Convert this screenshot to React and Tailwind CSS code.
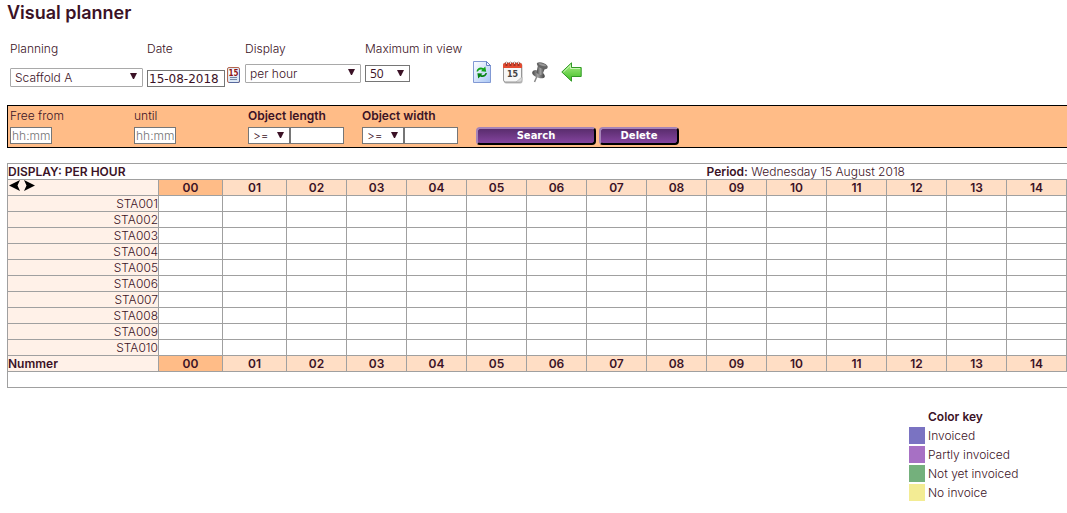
import clsx from 'clsx';

const HOURS = ['00', '01', '02', '03', '04', '05', '06', '07', '08', '09', '10', '11', '12', '13', '14'];

const OBJECTS = [
  'STA001', 'STA002', 'STA003', 'STA004', 'STA005',
  'STA006', 'STA007', 'STA008', 'STA009', 'STA010',
];

const COLOR_KEY = [
  { label: 'Invoiced', color: 'bg-[#7a73c2]' },
  { label: 'Partly invoiced', color: 'bg-[#a770c4]' },
  { label: 'Not yet invoiced', color: 'bg-[#74b07c]' },
  { label: 'No invoice', color: 'bg-[#f3ec94]' },
];

const Select = ({ id, label, options, className }) => (
  <span className={clsx('relative block', className)}>
    <select
      id={id}
      aria-label={label}
      className="block h-full w-full appearance-none rounded-[inherit] border border-[inherit] bg-white pl-1 outline-none"
    >
      {options.map((option) => (
        <option key={option}>{option}</option>
      ))}
    </select>
    <svg viewBox="0 0 7 6" className="pointer-events-none absolute top-[5px] right-[6px] h-[6px] w-[7px]">
      <path d="M0 0h7L4 6H3z" fill="#3b1226" />
    </svg>
  </span>
);

const SmallCalendarIcon = () => (
  <svg viewBox="0 0 13 16" className="h-4 w-[13px]">
    <rect x=".5" y=".5" width="12" height="15" rx="1.5" fill="#dce8f6" stroke="#b4674f" />
    <path d="M12.500 3v11.500q0 1-1 1H2" fill="none" stroke="#56689c" />
    <rect x="2" y="2" width="9" height="7" fill="#fff" />
    <text x="6.500" y="8.500" textAnchor="middle" fontFamily="DejaVu Sans Condensed, DejaVu Sans, sans-serif" fontSize="8" fontWeight="bold" fill="#8c1414">15</text>
    <path d="M3 10.500h7M3 12.500h7" stroke="#7487a4" />
  </svg>
);

const RefreshIcon = () => (
  <svg viewBox="0 0 18 22" className="h-[22px] w-[18px]">
    <defs>
      <linearGradient id="sheet" x1="0" y1="0" x2="1" y2="1">
        <stop offset="0" stopColor="#fff" />
        <stop offset="1" stopColor="#a9c6f5" />
      </linearGradient>
    </defs>
    <path d="M.5.5h13l4 4v17H.5z" fill="url(#sheet)" stroke="#8199d4" />
    <path d="M13.5.5v4h4z" fill="#f4f8ff" stroke="#6581c4" />
    <path d="M3.500 10.500C4 7 7.500 5.500 10.500 7.200L12.300 5.500 13.200 10.700 8 10.300 9.400 8.800C7.300 7.900 5.700 8.500 5 10.500z" fill="#12a51c" />
    <path d="M14 12c-.6 3.500-4 5-6.800 3.500L5.200 17.400 4.400 12.200l5.100.3-1.300 1.400c1.800.8 3.500.1 4.300-1.900z" fill="#078312" />
  </svg>
);

const CalendarIcon = () => (
  <svg viewBox="0 0 20 23" className="h-[23px] w-5">
    <rect x="1" y="2.500" width="18.500" height="20" rx="2" fill="#b9b9b9" />
    <rect x=".5" y="2" width="18" height="19" rx="2" fill="#f7f7f7" stroke="#969696" />
    <path d="M0 7V3.500Q0 2 2 2h15q2 0 2 1.500V7z" fill="#e34a30" />
    <path d="M3.500 1v4M7.500 1v4M11.500 1v4M15.500 1v4" stroke="#9c3324" strokeWidth="2" />
    <path d="M3.500 0v3M7.500 0v3M11.500 0v3M15.500 0v3" stroke="#e8d5d0" />
    <text x="9.500" y="15.500" textAnchor="middle" fontFamily="DejaVu Sans, sans-serif" fontSize="8" fontWeight="bold" fill="#444">15</text>
    <path d="M13 21l6-5v3q0 2-2 2z" fill="#d8d8d8" stroke="#aaa" strokeWidth=".6" />
  </svg>
);

const PinIcon = () => (
  <svg viewBox="0 0 16 21" className="h-[21px] w-4">
    <defs>
      <linearGradient id="pin" x1="0" y1="0" x2="1" y2="0">
        <stop offset="0" stopColor="#444" />
        <stop offset=".45" stopColor="#a0a0a0" />
        <stop offset="1" stopColor="#404040" />
      </linearGradient>
    </defs>
    <path d="M5.500 13L2.500 20" stroke="#888" strokeWidth="1.500" />
    <path d="M4 8c-3 0-4.500 2-3.500 4 2 3 7.500 5 11 4 2-.8 1.500-3-.5-5z" fill="url(#pin)" />
    <path d="M6 3L4.500 10.500c1.500 2 4 3 6 2L13 6z" fill="url(#pin)" />
    <path d="M5 1c2-1.500 8-.5 10.500 3 .8 2-1 3.500-3 3.200C9 7 4 4 5 1z" fill="#666" />
    <path d="M6.500 1.500c2-.8 6 .3 8 2.500-2 .8-7-.2-8-2.500z" fill="#989898" />
  </svg>
);

const BackIcon = () => (
  <svg viewBox="0 0 21 20" className="h-5 w-[21px]">
    <defs>
      <linearGradient id="back" x1="0" y1="0" x2="0" y2="1">
        <stop offset="0" stopColor="#aef08c" />
        <stop offset="1" stopColor="#3fbd22" />
      </linearGradient>
    </defs>
    <path d="M.8 10L10.500.8v4.700h9.700v9h-9.700v4.700z" fill="url(#back)" stroke="#329a26" strokeLinejoin="round" />
    <path d="M2.500 10l7-6.700v3.200h9.500" fill="none" stroke="#cdf7b8" />
  </svg>
);

const Toolbar = () => (
  <div className="flex pl-[10px]">
    <div className="w-[137px] shrink-0">
      <label htmlFor="planning" className="block h-4">Planning</label>
      <Select id="planning" options={['Scaffold A']} className="mt-[11px] h-[19px] w-[133px] rounded-[1px] border-[#a9a9a9]" />
    </div>
    <div className="w-[98px] shrink-0">
      <label htmlFor="date" className="block h-4">Date</label>
      <div className="mt-[10px] flex gap-[2px]">
        <input
          id="date"
          defaultValue="15-08-2018"
          className="mt-[3px] h-[17px] w-[78px] border border-[#767676] bg-white pl-px font-['DejaVu_Sans',sans-serif] text-[12px] font-normal"
        />
        <button type="button" aria-label="Pick a date" className="h-4">
          <SmallCalendarIcon />
        </button>
      </div>
    </div>
    <div className="w-[120px] shrink-0">
      <label htmlFor="display" className="block h-4">Display</label>
      <Select id="display" options={['per hour']} className="mt-[7px] h-[19px] w-[116px] rounded-[1px] border-[#a9a9a9]" />
    </div>
    <div className="w-[108px] shrink-0">
      <label htmlFor="maximum" className="block h-4 whitespace-nowrap">Maximum in view</label>
      <Select id="maximum" options={['50']} className="mt-[8px] h-[17px] w-[45px] border-[#767676] font-['Open_Sans',sans-serif] font-normal" />
    </div>
    <div className="mt-[19px] flex h-6 items-center">
      <button type="button" aria-label="Refresh" className="mr-3"><RefreshIcon /></button>
      <button type="button" aria-label="Calendar" className="mr-[9px]"><CalendarIcon /></button>
      <button type="button" aria-label="Pin" className="mr-[13px]"><PinIcon /></button>
      <button type="button" aria-label="Back"><BackIcon /></button>
    </div>
  </div>
);

const TimeField = ({ id, label, className }) => (
  <div className={clsx('shrink-0', className)}>
    <label htmlFor={id} className="block h-5 leading-5">{label}</label>
    <input
      id={id}
      placeholder="hh:mm"
      className="mt-px block h-[17px] w-[42px] border border-[#767676] bg-white px-px text-[12px] placeholder:text-[#757575]"
    />
  </div>
);

const SizeField = ({ id, label }) => (
  <div className="w-[114px] shrink-0">
    <label htmlFor={id} className="block h-5 text-[12px] leading-5 font-semibold">{label}</label>
    <div className="mt-px flex">
      <Select label={`${label} comparison`} options={['>=']} className="h-[17px] w-[42px] border-[#767676]" />
      <input id={id} className="h-[17px] w-[54px] border border-[#767676] bg-white px-px" />
    </div>
  </div>
);

const ActionButton = ({ children, className }) => (
  <button
    type="submit"
    className={clsx(
      "h-[18px] rounded-[4px] border-2 border-t-[#a684b8] border-r-black border-b-black border-l-[#a684b8] bg-linear-to-b from-[#5a2d6e] to-[#84449e] font-['DejaVu_Sans',sans-serif] text-[10px] leading-[14px] font-bold text-white",
      className
    )}
  >
    {children}
  </button>
);

const FilterBar = () => (
  <form
    onSubmit={(e) => e.preventDefault()}
    className="mt-[18px] ml-[7px] flex h-[43px] border border-r-0 border-black bg-[#ffbc87] pl-[2px]"
  >
    <TimeField id="from" label="Free from" className="w-[124px]" />
    <TimeField id="until" label="until" className="w-[114px]" />
    <SizeField id="length" label="Object length" />
    <SizeField id="width" label="Object width" />
    <div className="mt-[21px] flex gap-[3px]">
      <ActionButton className="w-[120px]">Search</ActionButton>
      <ActionButton className="w-[80px]">Delete</ActionButton>
    </div>
  </form>
);

const HourCells = () =>
  HOURS.map((hour, i) => (
    <th key={hour} className={clsx('border border-[#a0a0a0] font-semibold', i === 0 ? 'bg-[#ffbc87]' : 'bg-[#ffdec5]')}>
      {hour}
    </th>
  ));

const Planner = () => (
  <div className="mt-[15px] pl-[7px]">
    <table className="w-full table-fixed border-collapse text-[12px] leading-[15px]">
      <colgroup>
        <col className="w-[151px]" />
        <col className="w-[64px]" />
        <col className="w-[64px]" />
        {HOURS.slice(2).map((hour) => (
          <col key={hour} />
        ))}
      </colgroup>
      <thead>
        <tr className="h-4">
          <th colSpan={10} className="border border-r-0 border-[#a0a0a0] text-left font-semibold">DISPLAY: PER HOUR</th>
          <td colSpan={6} className="border border-x-0 border-[#a0a0a0]">
            <b className="font-semibold">Period:</b> Wednesday 15 August 2018
          </td>
        </tr>
        <tr className="h-4">
          <td className="border border-[#a0a0a0] bg-[#fff1e8]">
            <div className="flex h-[15px] gap-1 pl-px">
              <button type="button" aria-label="Previous" className="h-[11px]">
                <svg viewBox="0 0 11 11" className="h-[11px] w-[11px]"><path d="M0 5.500L11 0 8.500 5.500 11 11z" /></svg>
              </button>
              <button type="button" aria-label="Next" className="h-[11px]">
                <svg viewBox="0 0 11 11" className="h-[11px] w-[11px]"><path d="M11 5.500L0 0l2.500 5.500L0 11z" /></svg>
              </button>
            </div>
          </td>
          <HourCells />
        </tr>
      </thead>
      <tbody>
        {OBJECTS.map((name) => (
          <tr key={name} className="h-4">
            <th className="border border-[#a0a0a0] bg-[#fff1e8] text-right font-light">{name}</th>
            {HOURS.map((hour) => (
              <td key={hour} className="border border-[#a0a0a0]" />
            ))}
          </tr>
        ))}
      </tbody>
      <tfoot>
        <tr className="h-4">
          <th className="border border-[#a0a0a0] bg-[#fff1e8] text-left font-semibold">Nummer</th>
          <HourCells />
        </tr>
        <tr className="h-4">
          <td colSpan={16} className="border border-r-0 border-[#a0a0a0]" />
        </tr>
      </tfoot>
    </table>
  </div>
);

const ColorKey = () => (
  <div className="mt-[20px] ml-auto w-[158px]">
    <h2 className="h-[19px] pl-[19px] text-[12px] leading-[18px] font-semibold">Color key</h2>
    <ul className="flex flex-col gap-[2px]">
      {COLOR_KEY.map(({ label, color }) => (
        <li key={label} className="flex h-[17px] items-center gap-[3px]">
          <span className={clsx('h-[17px] w-4', color)} />
          {label}
        </li>
      ))}
    </ul>
  </div>
);

const App = () => (
  <main className="overflow-hidden bg-white pb-3 font-['Century_Gothic',Inter,sans-serif] text-[12px] leading-4 font-light text-[#3b1226]">
    <h1 className="mt-[2px] mb-[17px] pl-[7px] text-[18px] leading-[22px] font-semibold">Visual planner</h1>
    <Toolbar />
    <FilterBar />
    <Planner />
    <ColorKey />
  </main>
);

export default App;
